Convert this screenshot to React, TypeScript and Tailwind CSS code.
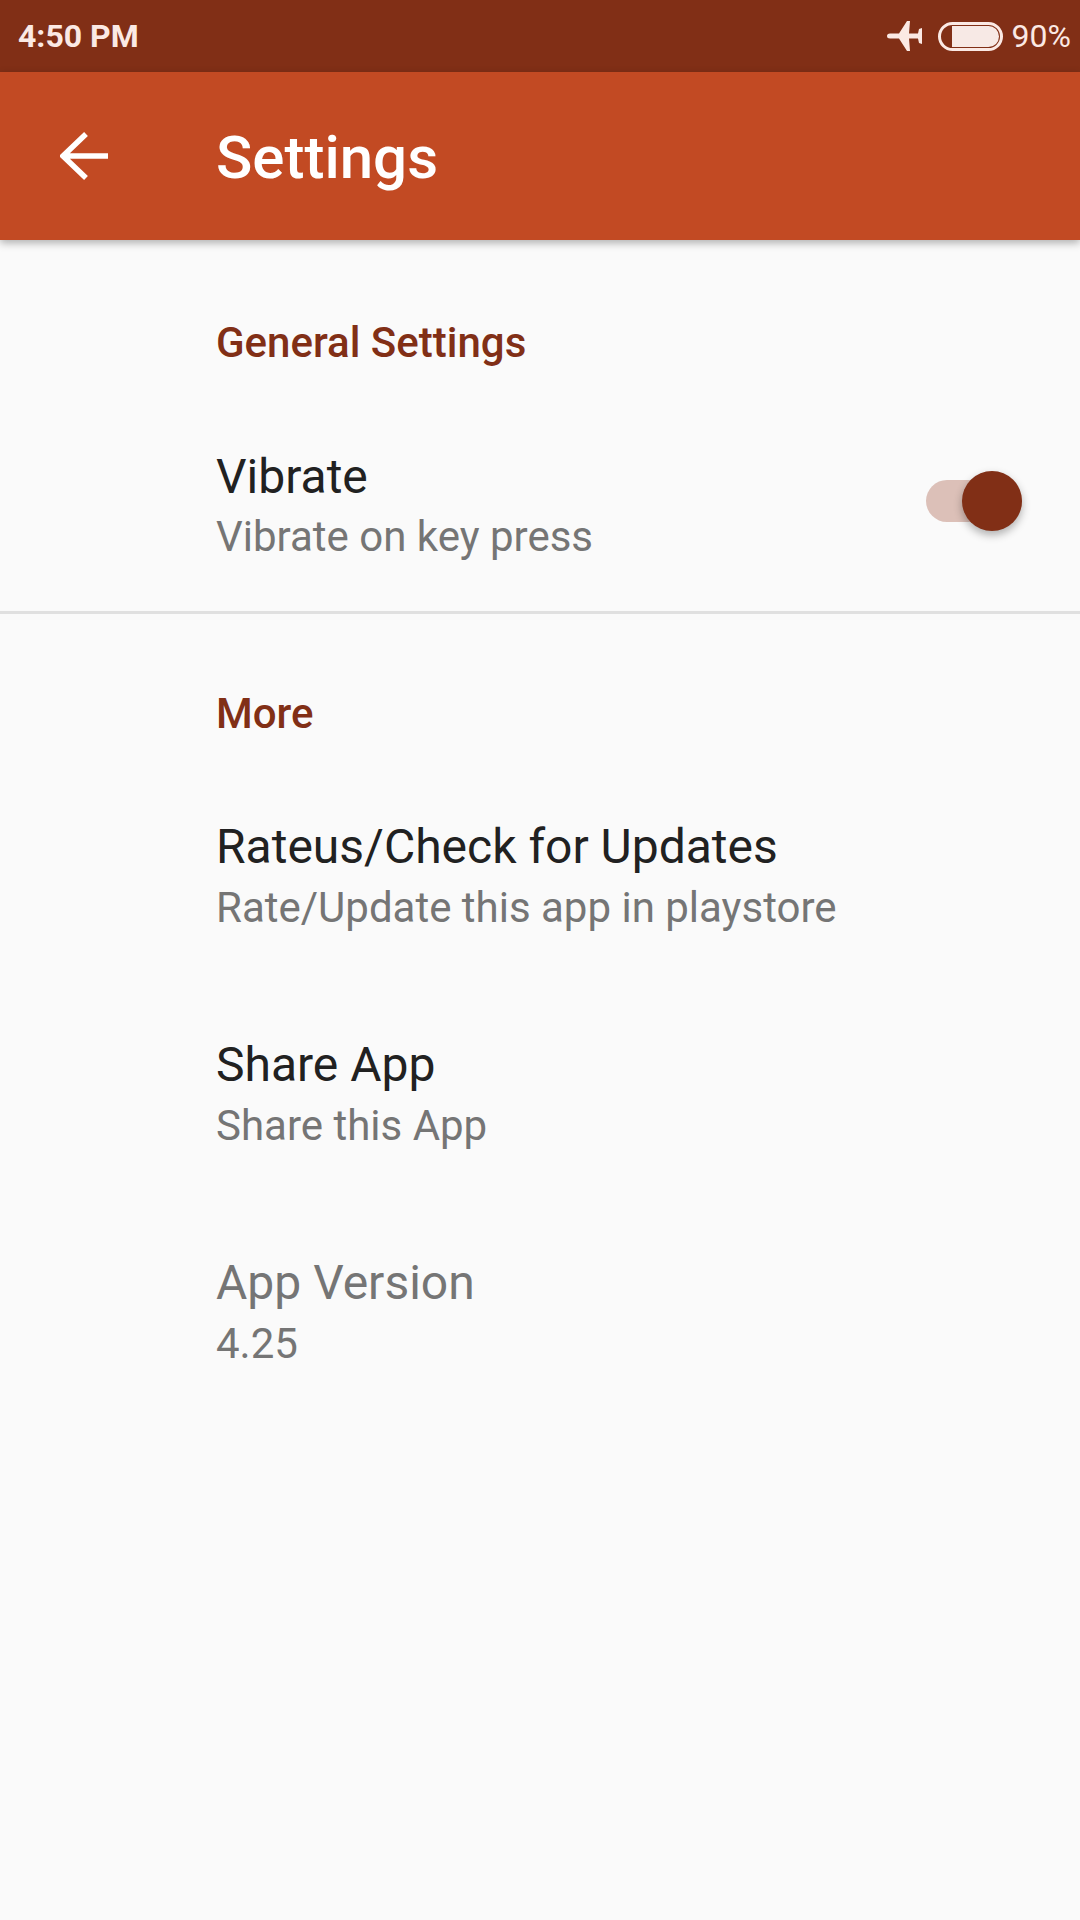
import React from "react";

const Row = ({ title, sub, dim }: { title: string; sub: string; dim?: boolean }) => {
  return (
    <div className="h-[218px] pl-[216px] flex flex-col justify-center">
      <p className={`text-[48px] leading-[64px] ${dim ? "text-[#757575]" : "text-[#212121]"}`}>{title}</p>
      <p className="text-[42px] leading-[58px] text-[#757575]">{sub}</p>
    </div>
  );
};

const App = () => {
  return (
    <div className="w-[1080px] h-[1920px] flex flex-col bg-[#fafafa] font-['Roboto',sans-serif] overflow-hidden">
      <div className="h-[72px] shrink-0 bg-[#812F16] flex items-center justify-between pl-[18px] pr-[9px] text-[#fbe9e4]">
        <span className="text-[32px] font-bold">4:50 PM</span>
        <div className="flex items-center">
          <svg width="35" height="30" viewBox="0 0 35 30" fill="#fbe9e4">
            <path d="M3 12.5h9L20 0h3l-1 12.5h9l1-4.500 3-1v16l-3-1-1-4.500H22l1 12.500h-3L12 17.500H3q-3 0-3-2.500t3-2.500z" />
          </svg>
          <div className="ml-[16px] w-[65px] h-[29px] rounded-full border-[3px] border-[#fbe9e4] p-[1px] flex justify-end">
            <div className="w-[47px] h-full rounded-l-[4px] rounded-r-full bg-[#f7e9e5]" />
          </div>
          <span className="ml-[9px] text-[32px]">90%</span>
        </div>
      </div>
      <div className="h-[168px] shrink-0 bg-[#C24A23] flex items-center shadow-[0_3px_8px_rgba(0,0,0,0.3)] z-10">
        <svg className="ml-[60px]" width="48" height="48" viewBox="0 0 48 48" fill="none" stroke="#fff" strokeWidth="5.5">
          <path d="M48 24H3M26 2L3 24l23 22" />
        </svg>
        <span className="ml-[108px] pt-[3px] text-[60px] font-medium text-white">Settings</span>
      </div>
      <div className="h-[374px] shrink-0 border-b-[3px] border-[#e0e0e0] flex flex-col">
        <p className="pl-[216px] pt-[78px] text-[42px] leading-[50px] font-medium text-[#812F16]">General Settings</p>
        <div className="flex items-center justify-between pr-[58px] mt-[77px]">
          <div className="pl-[216px]">
            <p className="text-[48px] leading-[64px] text-[#212121]">Vibrate</p>
            <p className="text-[42px] leading-[56px] text-[#757575]">Vibrate on key press</p>
          </div>
          <div className="relative mb-[8px] w-[96px] h-[42px] rounded-full bg-[#DCC0B8]">
            <div className="absolute right-0 -top-[9px] w-[60px] h-[60px] rounded-full bg-[#812F16] shadow-[0_4px_8px_rgba(0,0,0,0.3)]" />
          </div>
        </div>
      </div>
      <p className="pl-[216px] pt-[75px] pb-[28px] text-[42px] leading-[50px] font-medium text-[#812F16]">More</p>
      <Row title="Rateus/Check for Updates" sub="Rate/Update this app in playstore" />
      <Row title="Share App" sub="Share this App" />
      <Row title="App Version" sub="4.25" dim />
    </div>
  );
};

export default App;
